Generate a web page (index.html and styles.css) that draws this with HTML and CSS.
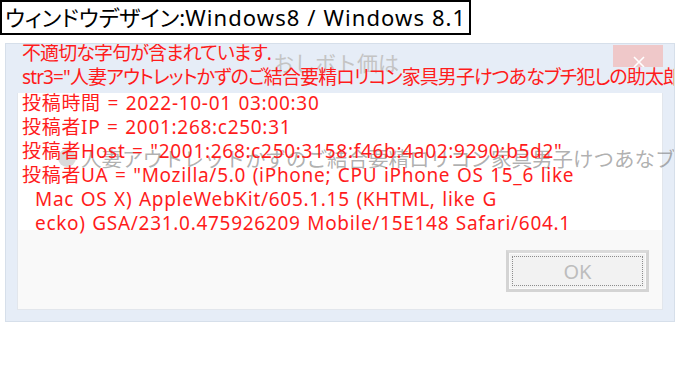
FILE: index.html
```html
<!DOCTYPE html>
<html lang="ja">
<head>
    <meta charset="UTF-8">
    <title>ウィンドウデザイン:Windows8 / Windows 8.1</title>
    <link rel="stylesheet" href="styles.css">
</head>
<body>
    <div class="caption">ウィンドウデザイン:<span class="latin">Windows8 / Windows 8.1</span></div>

    <div class="msgbox">
        <div class="titlebar">
            <span class="close">
                <svg width="50" height="22" viewBox="0 0 50 22">
                    <path d="M21 12 L31 22 M31 12 L21 22" stroke="#fff" stroke-width="1.6" fill="none"/>
                </svg>
            </span>
        </div>
        <div class="client">
            <div class="client-text"></div>
            <div class="client-buttons">
                <button class="ok">OK</button>
            </div>
        </div>

        <!-- faded leftovers of the window title and the previous dialog -->
        <span class="ghost-title">おしボト価は</span>
        <div class="ghost-line"><span class="ghost-icon"></span>人妻アウトレットかずのご結合要精ロリコン家具男子けつあなブチ犯しの助太郎</div>

        <div class="message">
            <div class="tight">不適切な字句が含まれています.</div>
            <div class="tight">str3="人妻アウトレットかずのご結合要精ロリコン家具男子けつあなブチ犯しの助太郎</div>
            <div class="gap">投稿時間 = 2022-10-01 03:00:30</div>
            <div>投稿者IP = 2001:268:c250:31</div>
            <div>投稿者Host = "2001:268:c250:3158:f46b:4a02:9290:b5d2"</div>
            <div>投稿者UA = "Mozilla/5.0 (iPhone; CPU iPhone OS 15_6 like</div>
            <div class="wrap">Mac OS X) AppleWebKit/605.1.15 (KHTML, like G</div>
            <div class="wrap">ecko) GSA/231.0.475926209 Mobile/15E148 Safari/604.1</div>
        </div>
    </div>
</body>
</html>
```

FILE: styles.css
```css
body {
    margin: 0;
    background: #ffffff;
    font-family: "Noto Sans", "Noto Sans CJK JP", sans-serif;
    font-feature-settings: "palt";
}
.caption {
    width: fit-content;
    border: 2px solid #000;
    padding: 0 3px;
    height: 31px;
    line-height: 31px;
    font-size: 22px;
    color: #000;
}
.caption .latin {
    letter-spacing: 1.1px;
}
.msgbox {
    position: relative;
    box-sizing: border-box;
    width: 670px;
    height: 279px;
    margin: 8px 0 0 5px;
    padding: 0 11px 11px 11px;
    background: #e6edf7;
    border: 1px solid #d6dfea;
    overflow: hidden;
}
.titlebar {
    height: 49px;
    display: flex;
    justify-content: flex-end;
    align-items: flex-start;
    padding-top: 1px;
    box-sizing: border-box;
}
.close {
    display: block;
    width: 50px;
    height: 22px;
    background: #efc8c9;
}
.close svg {
    display: block;
}
.client {
    height: 217px;
    background: #f9f9f9;
    border: 1px solid #e2e6ec;
    border-top: none;
    box-sizing: border-box;
}
.client-text {
    height: 137px;
    background: #ffffff;
}
.client-buttons {
    display: flex;
    justify-content: flex-end;
    padding: 20px 13px 0 0;
}
.ok {
    width: 143px;
    height: 42px;
    background: #f2f2f2;
    border: 3px solid #d4d4d4;
    border-top-color: #dadada;
    box-shadow: inset 0 0 0 1px #fbfbfb;
    outline: 1px dotted #8c8c8c;
    outline-offset: -7px;
    font-family: "Noto Sans", sans-serif;
    font-size: 20px;
    color: #bdbdbd;
    padding: 0;
}
.ghost-title {
    position: absolute;
    left: 267px;
    top: 6px;
    font-family: "Noto Sans CJK JP", sans-serif;
    font-feature-settings: normal;
    font-size: 21px;
    line-height: 24px;
    color: #c4c4c4;
}
.ghost-line {
    position: absolute;
    left: 52px;
    top: 102px;
    display: flex;
    align-items: center;
    gap: 5px;
    font-family: "Noto Sans CJK JP", sans-serif;
    font-feature-settings: normal;
    font-size: 20.5px;
    line-height: 24px;
    white-space: nowrap;
    color: rgba(110, 110, 110, 0.55);
}
.ghost-icon {
    width: 18px;
    height: 18px;
    border-radius: 50%;
    background: rgba(150, 150, 150, 0.35);
}
.message {
    position: absolute;
    left: 16px;
    top: -3px;
    font-size: 19px;
    line-height: 24px;
    letter-spacing: 0.7px;
    word-spacing: 1px;
    color: #ff1c1c;
    white-space: nowrap;
}
.message .tight {
    letter-spacing: -0.9px;
    word-spacing: 0;
}
.message .gap {
    margin-top: 2px;
}
.message .wrap {
    padding-left: 13px;
}
```
